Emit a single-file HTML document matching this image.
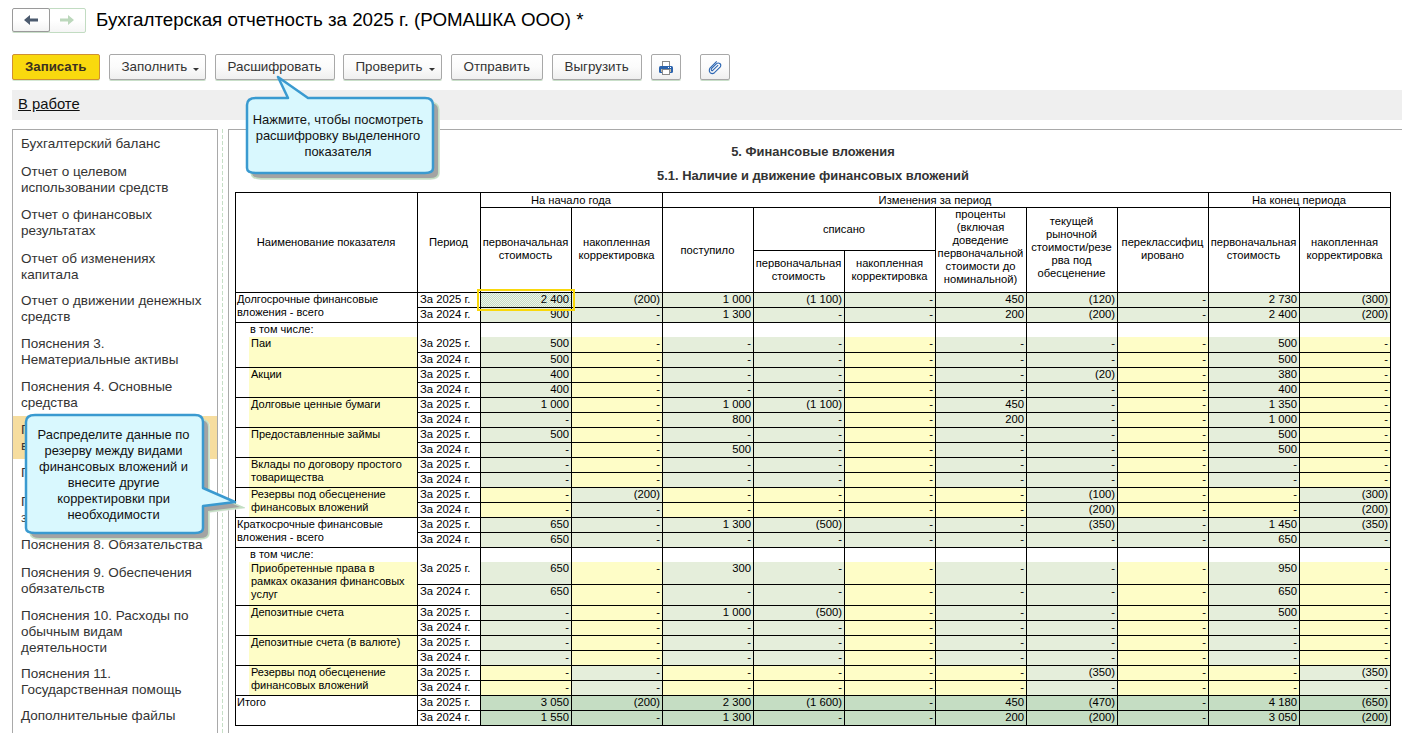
<!DOCTYPE html><html><head><meta charset="utf-8"><style>
*{margin:0;padding:0;box-sizing:border-box}
html,body{width:1402px;height:733px;overflow:hidden;background:#fff;font-family:"Liberation Sans", sans-serif;}
.a{position:absolute}
.t{position:absolute;font-size:11.3px;line-height:13px;color:#000;white-space:nowrap}
.hl{position:absolute;background:#000;height:1px}
.vl{position:absolute;background:#000;width:1px}
.btn{position:absolute;top:54px;height:26px;border:1px solid #a8a8a8;border-radius:2px;background:linear-gradient(#ffffff 0%,#fbfbfb 50%,#efefef 100%);box-shadow:0 1px 0 #c9dfc9;font-size:13px;color:#333;text-align:center;line-height:24px;white-space:nowrap}
.side{position:absolute;left:21px;font-size:13.5px;line-height:16px;color:#333;white-space:nowrap}
</style></head><body>
<div class="a" style="left:49px;top:8px;width:37px;height:25px;border:1px solid #c2dcc2;border-radius:0 2px 2px 0;background:linear-gradient(#fff 50%,#f5f5f5)"></div>
<div class="a" style="left:12px;top:8px;width:38px;height:24px;border:1px solid #9a9a9a;border-radius:2px;background:linear-gradient(#fff 50%,#f3f3f3);box-shadow:0 1px 0 #c9dfc9"></div>
<svg class="a" style="left:24px;top:15px" width="15" height="11"><path d="M0 5 L6 0 L6 3.5 L14 3.5 L14 6.5 L6 6.5 L6 10 Z" fill="#4b5a6e"/></svg>
<svg class="a" style="left:60px;top:15px" width="15" height="11"><path d="M14 5 L8 0 L8 3.5 L0 3.5 L0 6.5 L8 6.5 L8 10 Z" fill="#bcd8bc"/></svg>
<div class="a" style="left:96px;top:6.5px;font-size:18.75px;line-height:26px;color:#000;white-space:nowrap">Бухгалтерская отчетность за 2025 г. (РОМАШКА ООО) *</div>
<div class="btn" style="left:12px;width:88px;background:#f9d90e;border-color:#cf9034;box-shadow:0 1px 0 #d5e8d5"></div>
<div class="a" style="left:25px;top:59px;font-size:13.25px;line-height:16px;font-weight:bold;color:#3b3020;white-space:nowrap">Записать</div>
<div class="btn" style="left:109px;width:97px"></div>
<div class="a" style="left:121.5px;top:59px;font-size:13.4px;line-height:16px;color:#333;white-space:nowrap">Заполнить</div>
<svg class="a" style="left:193px;top:68px" width="7" height="4"><path d="M0 0 L6 0 L3 3 Z" fill="#333"/></svg>
<div class="btn" style="left:215px;width:120px"></div>
<div class="a" style="left:227.5px;top:59px;font-size:13.4px;line-height:16px;color:#333;white-space:nowrap">Расшифровать</div>
<div class="btn" style="left:343px;width:99px"></div>
<div class="a" style="left:355.5px;top:59px;font-size:13.4px;line-height:16px;color:#333;white-space:nowrap">Проверить</div>
<svg class="a" style="left:429px;top:68px" width="7" height="4"><path d="M0 0 L6 0 L3 3 Z" fill="#333"/></svg>
<div class="btn" style="left:451px;width:92px"></div>
<div class="a" style="left:463.5px;top:59px;font-size:13.4px;line-height:16px;color:#333;white-space:nowrap">Отправить</div>
<div class="btn" style="left:552px;width:90px"></div>
<div class="a" style="left:564.5px;top:59px;font-size:13.4px;line-height:16px;color:#333;white-space:nowrap">Выгрузить</div>
<div class="btn" style="left:651px;width:30px"></div>
<div class="btn" style="left:700px;width:30px"></div>
<svg class="a" style="left:653px;top:56px" width="26" height="22"><rect x="9.5" y="5.5" width="7" height="6" fill="#fff" stroke="#8a8a8a" stroke-width="1"/><path d="M15 5 L17 7 L17 5 Z" fill="#8a8a8a"/><rect x="6" y="10" width="14" height="7" rx="1.5" fill="#2b63ad"/><rect x="15" y="11" width="1" height="1" fill="#fff"/><rect x="17" y="11" width="1" height="1" fill="#fff"/><rect x="8" y="13" width="1" height="3" fill="#c8bfa8"/><rect x="17" y="13" width="1" height="3" fill="#c8bfa8"/><rect x="9.5" y="13.5" width="7" height="5" fill="#fff" stroke="#8a8a8a" stroke-width="1"/></svg>
<svg class="a" style="left:702px;top:56px" width="26" height="22"><path d="M14.7 5.4 L7.8 12.3 Q6.5 15.5 8.5 17 Q10.5 18.3 12.5 16.7 L18.3 11 Q19.5 8.8 17.8 7.5 Q16 6.3 14.3 7.8 L9.5 12.6 Q8.8 14.3 10.2 14.8 L16.2 9.2" fill="none" stroke="#2d67b3" stroke-width="1.1"/></svg>
<div class="a" style="left:12px;top:90px;width:1390px;height:30px;background:#efefef"></div>
<div class="a" style="left:18px;top:95px;font-size:14.8px;line-height:18px;color:#111;text-decoration:underline;white-space:nowrap">В работе</div>
<div class="a" style="left:12px;top:129px;width:206px;height:620px;border:1px solid #a9a9a9;border-bottom:none"></div>
<div class="a" style="left:13px;top:416px;width:204px;height:43px;background:#f6dd9f"></div>
<div class="side" style="top:135.5px">Бухгалтерский баланс</div>
<div class="side" style="top:163.5px">Отчет о целевом<br>использовании средств</div>
<div class="side" style="top:206.5px">Отчет о финансовых<br>результатах</div>
<div class="side" style="top:250.5px">Отчет об изменениях<br>капитала</div>
<div class="side" style="top:292.5px">Отчет о движении денежных<br>средств</div>
<div class="side" style="top:335.5px">Пояснения 3.<br>Нематериальные активы</div>
<div class="side" style="top:378.5px">Пояснения 4. Основные<br>средства</div>
<div class="side" style="top:421.5px">Пояснения 5. Финансовые<br>вложения</div>
<div class="side" style="top:464.5px">Пояснения 6. Запасы</div>
<div class="side" style="top:493.5px">Пояснения 7. Дебиторская<br>задолженность</div>
<div class="side" style="top:536.5px">Пояснения 8. Обязательства</div>
<div class="side" style="top:564.5px">Пояснения 9. Обеспечения<br>обязательств</div>
<div class="side" style="top:607.5px">Пояснения 10. Расходы по<br>обычным видам<br>деятельности</div>
<div class="side" style="top:665.5px">Пояснения 11.<br>Государственная помощь</div>
<div class="side" style="top:707.5px">Дополнительные файлы</div>
<div class="a" style="left:222px;top:129px;width:1px;height:604px;background:repeating-linear-gradient(#c6dfc6 0 4px,transparent 4px 6px)"></div>
<div class="a" style="left:228px;top:129px;width:1180px;height:620px;border:1px solid #a9a9a9;border-right:none;border-bottom:none"></div>
<div class="a" style="left:613px;top:144px;width:400px;text-align:center;font-size:12.9px;font-weight:bold;line-height:16px;color:#333">5. Финансовые вложения</div>
<div class="a" style="left:513px;top:168px;width:600px;text-align:center;font-size:12.9px;font-weight:bold;line-height:16px;color:#333">5.1. Наличие и движение финансовых вложений</div>
<div class="t" style="left:237px;top:293px;font-size:11px">Долгосрочные финансовые<br>вложения - всего</div><div class="t" style="left:420px;top:293px;">За 2025 г.</div><div class="a" style="left:481px;top:293px;width:90px;height:14px;background:repeating-conic-gradient(#c4dcc4 0 25%,#eef4e8 0 50%) 0 0/2px 2px"></div><div class="t" style="left:480px;width:89px;top:293px;text-align:right;">2 400</div><div class="a" style="left:572px;top:293px;width:90px;height:14px;background:#e5eedb"></div><div class="t" style="left:571px;width:89px;top:293px;text-align:right;">(200)</div><div class="a" style="left:663px;top:293px;width:90px;height:14px;background:#e5eedb"></div><div class="t" style="left:662px;width:89px;top:293px;text-align:right;">1 000</div><div class="a" style="left:754px;top:293px;width:90px;height:14px;background:#e5eedb"></div><div class="t" style="left:753px;width:89px;top:293px;text-align:right;">(1 100)</div><div class="a" style="left:845px;top:293px;width:90px;height:14px;background:#e5eedb"></div><div class="t" style="left:844px;width:89px;top:293px;text-align:right;">-</div><div class="a" style="left:936px;top:293px;width:90px;height:14px;background:#e5eedb"></div><div class="t" style="left:935px;width:89px;top:293px;text-align:right;">450</div><div class="a" style="left:1027px;top:293px;width:90px;height:14px;background:#e5eedb"></div><div class="t" style="left:1026px;width:89px;top:293px;text-align:right;">(120)</div><div class="a" style="left:1118px;top:293px;width:90px;height:14px;background:#e5eedb"></div><div class="t" style="left:1117px;width:89px;top:293px;text-align:right;">-</div><div class="a" style="left:1209px;top:293px;width:90px;height:14px;background:#e5eedb"></div><div class="t" style="left:1208px;width:89px;top:293px;text-align:right;">2 730</div><div class="a" style="left:1300px;top:293px;width:90px;height:14px;background:#e5eedb"></div><div class="t" style="left:1299px;width:89px;top:293px;text-align:right;">(300)</div><div class="t" style="left:420px;top:308px;">За 2024 г.</div><div class="a" style="left:481px;top:308px;width:90px;height:14px;background:#e5eedb"></div><div class="t" style="left:480px;width:89px;top:308px;text-align:right;">900</div><div class="a" style="left:572px;top:308px;width:90px;height:14px;background:#e5eedb"></div><div class="t" style="left:571px;width:89px;top:308px;text-align:right;">-</div><div class="a" style="left:663px;top:308px;width:90px;height:14px;background:#e5eedb"></div><div class="t" style="left:662px;width:89px;top:308px;text-align:right;">1 300</div><div class="a" style="left:754px;top:308px;width:90px;height:14px;background:#e5eedb"></div><div class="t" style="left:753px;width:89px;top:308px;text-align:right;">-</div><div class="a" style="left:845px;top:308px;width:90px;height:14px;background:#e5eedb"></div><div class="t" style="left:844px;width:89px;top:308px;text-align:right;">-</div><div class="a" style="left:936px;top:308px;width:90px;height:14px;background:#e5eedb"></div><div class="t" style="left:935px;width:89px;top:308px;text-align:right;">200</div><div class="a" style="left:1027px;top:308px;width:90px;height:14px;background:#e5eedb"></div><div class="t" style="left:1026px;width:89px;top:308px;text-align:right;">(200)</div><div class="a" style="left:1118px;top:308px;width:90px;height:14px;background:#e5eedb"></div><div class="t" style="left:1117px;width:89px;top:308px;text-align:right;">-</div><div class="a" style="left:1209px;top:308px;width:90px;height:14px;background:#e5eedb"></div><div class="t" style="left:1208px;width:89px;top:308px;text-align:right;">2 400</div><div class="a" style="left:1300px;top:308px;width:90px;height:14px;background:#e5eedb"></div><div class="t" style="left:1299px;width:89px;top:308px;text-align:right;">(200)</div><div class="t" style="left:250px;top:323px;font-size:11px">в том числе:</div><div class="a" style="left:249px;top:337px;width:168px;height:30px;background:#fefdc7"></div><div class="t" style="left:251px;top:337px;font-size:11px">Паи</div><div class="t" style="left:420px;top:337px;">За 2025 г.</div><div class="a" style="left:481px;top:337px;width:90px;height:15px;background:#e5eedb"></div><div class="t" style="left:480px;width:89px;top:337px;text-align:right;">500</div><div class="a" style="left:572px;top:337px;width:90px;height:15px;background:#fefdc7"></div><div class="t" style="left:571px;width:89px;top:337px;text-align:right;">-</div><div class="a" style="left:663px;top:337px;width:90px;height:15px;background:#e5eedb"></div><div class="t" style="left:662px;width:89px;top:337px;text-align:right;">-</div><div class="a" style="left:754px;top:337px;width:90px;height:15px;background:#e5eedb"></div><div class="t" style="left:753px;width:89px;top:337px;text-align:right;">-</div><div class="a" style="left:845px;top:337px;width:90px;height:15px;background:#fefdc7"></div><div class="t" style="left:844px;width:89px;top:337px;text-align:right;">-</div><div class="a" style="left:936px;top:337px;width:90px;height:15px;background:#e5eedb"></div><div class="t" style="left:935px;width:89px;top:337px;text-align:right;">-</div><div class="a" style="left:1027px;top:337px;width:90px;height:15px;background:#e5eedb"></div><div class="t" style="left:1026px;width:89px;top:337px;text-align:right;">-</div><div class="a" style="left:1118px;top:337px;width:90px;height:15px;background:#fefdc7"></div><div class="t" style="left:1117px;width:89px;top:337px;text-align:right;">-</div><div class="a" style="left:1209px;top:337px;width:90px;height:15px;background:#e5eedb"></div><div class="t" style="left:1208px;width:89px;top:337px;text-align:right;">500</div><div class="a" style="left:1300px;top:337px;width:90px;height:15px;background:#fefdc7"></div><div class="t" style="left:1299px;width:89px;top:337px;text-align:right;">-</div><div class="t" style="left:420px;top:353px;">За 2024 г.</div><div class="a" style="left:481px;top:353px;width:90px;height:14px;background:#e5eedb"></div><div class="t" style="left:480px;width:89px;top:353px;text-align:right;">500</div><div class="a" style="left:572px;top:353px;width:90px;height:14px;background:#fefdc7"></div><div class="t" style="left:571px;width:89px;top:353px;text-align:right;">-</div><div class="a" style="left:663px;top:353px;width:90px;height:14px;background:#e5eedb"></div><div class="t" style="left:662px;width:89px;top:353px;text-align:right;">-</div><div class="a" style="left:754px;top:353px;width:90px;height:14px;background:#e5eedb"></div><div class="t" style="left:753px;width:89px;top:353px;text-align:right;">-</div><div class="a" style="left:845px;top:353px;width:90px;height:14px;background:#fefdc7"></div><div class="t" style="left:844px;width:89px;top:353px;text-align:right;">-</div><div class="a" style="left:936px;top:353px;width:90px;height:14px;background:#e5eedb"></div><div class="t" style="left:935px;width:89px;top:353px;text-align:right;">-</div><div class="a" style="left:1027px;top:353px;width:90px;height:14px;background:#e5eedb"></div><div class="t" style="left:1026px;width:89px;top:353px;text-align:right;">-</div><div class="a" style="left:1118px;top:353px;width:90px;height:14px;background:#fefdc7"></div><div class="t" style="left:1117px;width:89px;top:353px;text-align:right;">-</div><div class="a" style="left:1209px;top:353px;width:90px;height:14px;background:#e5eedb"></div><div class="t" style="left:1208px;width:89px;top:353px;text-align:right;">500</div><div class="a" style="left:1300px;top:353px;width:90px;height:14px;background:#fefdc7"></div><div class="t" style="left:1299px;width:89px;top:353px;text-align:right;">-</div><div class="a" style="left:249px;top:368px;width:168px;height:29px;background:#fefdc7"></div><div class="t" style="left:251px;top:368px;font-size:11px">Акции</div><div class="t" style="left:420px;top:368px;">За 2025 г.</div><div class="a" style="left:481px;top:368px;width:90px;height:14px;background:#e5eedb"></div><div class="t" style="left:480px;width:89px;top:368px;text-align:right;">400</div><div class="a" style="left:572px;top:368px;width:90px;height:14px;background:#fefdc7"></div><div class="t" style="left:571px;width:89px;top:368px;text-align:right;">-</div><div class="a" style="left:663px;top:368px;width:90px;height:14px;background:#e5eedb"></div><div class="t" style="left:662px;width:89px;top:368px;text-align:right;">-</div><div class="a" style="left:754px;top:368px;width:90px;height:14px;background:#e5eedb"></div><div class="t" style="left:753px;width:89px;top:368px;text-align:right;">-</div><div class="a" style="left:845px;top:368px;width:90px;height:14px;background:#fefdc7"></div><div class="t" style="left:844px;width:89px;top:368px;text-align:right;">-</div><div class="a" style="left:936px;top:368px;width:90px;height:14px;background:#e5eedb"></div><div class="t" style="left:935px;width:89px;top:368px;text-align:right;">-</div><div class="a" style="left:1027px;top:368px;width:90px;height:14px;background:#e5eedb"></div><div class="t" style="left:1026px;width:89px;top:368px;text-align:right;">(20)</div><div class="a" style="left:1118px;top:368px;width:90px;height:14px;background:#fefdc7"></div><div class="t" style="left:1117px;width:89px;top:368px;text-align:right;">-</div><div class="a" style="left:1209px;top:368px;width:90px;height:14px;background:#e5eedb"></div><div class="t" style="left:1208px;width:89px;top:368px;text-align:right;">380</div><div class="a" style="left:1300px;top:368px;width:90px;height:14px;background:#fefdc7"></div><div class="t" style="left:1299px;width:89px;top:368px;text-align:right;">-</div><div class="t" style="left:420px;top:383px;">За 2024 г.</div><div class="a" style="left:481px;top:383px;width:90px;height:14px;background:#e5eedb"></div><div class="t" style="left:480px;width:89px;top:383px;text-align:right;">400</div><div class="a" style="left:572px;top:383px;width:90px;height:14px;background:#fefdc7"></div><div class="t" style="left:571px;width:89px;top:383px;text-align:right;">-</div><div class="a" style="left:663px;top:383px;width:90px;height:14px;background:#e5eedb"></div><div class="t" style="left:662px;width:89px;top:383px;text-align:right;">-</div><div class="a" style="left:754px;top:383px;width:90px;height:14px;background:#e5eedb"></div><div class="t" style="left:753px;width:89px;top:383px;text-align:right;">-</div><div class="a" style="left:845px;top:383px;width:90px;height:14px;background:#fefdc7"></div><div class="t" style="left:844px;width:89px;top:383px;text-align:right;">-</div><div class="a" style="left:936px;top:383px;width:90px;height:14px;background:#e5eedb"></div><div class="t" style="left:935px;width:89px;top:383px;text-align:right;">-</div><div class="a" style="left:1027px;top:383px;width:90px;height:14px;background:#e5eedb"></div><div class="t" style="left:1026px;width:89px;top:383px;text-align:right;">-</div><div class="a" style="left:1118px;top:383px;width:90px;height:14px;background:#fefdc7"></div><div class="t" style="left:1117px;width:89px;top:383px;text-align:right;">-</div><div class="a" style="left:1209px;top:383px;width:90px;height:14px;background:#e5eedb"></div><div class="t" style="left:1208px;width:89px;top:383px;text-align:right;">400</div><div class="a" style="left:1300px;top:383px;width:90px;height:14px;background:#fefdc7"></div><div class="t" style="left:1299px;width:89px;top:383px;text-align:right;">-</div><div class="a" style="left:249px;top:398px;width:168px;height:29px;background:#fefdc7"></div><div class="t" style="left:251px;top:398px;font-size:11px">Долговые ценные бумаги</div><div class="t" style="left:420px;top:398px;">За 2025 г.</div><div class="a" style="left:481px;top:398px;width:90px;height:14px;background:#e5eedb"></div><div class="t" style="left:480px;width:89px;top:398px;text-align:right;">1 000</div><div class="a" style="left:572px;top:398px;width:90px;height:14px;background:#fefdc7"></div><div class="t" style="left:571px;width:89px;top:398px;text-align:right;">-</div><div class="a" style="left:663px;top:398px;width:90px;height:14px;background:#e5eedb"></div><div class="t" style="left:662px;width:89px;top:398px;text-align:right;">1 000</div><div class="a" style="left:754px;top:398px;width:90px;height:14px;background:#e5eedb"></div><div class="t" style="left:753px;width:89px;top:398px;text-align:right;">(1 100)</div><div class="a" style="left:845px;top:398px;width:90px;height:14px;background:#fefdc7"></div><div class="t" style="left:844px;width:89px;top:398px;text-align:right;">-</div><div class="a" style="left:936px;top:398px;width:90px;height:14px;background:#e5eedb"></div><div class="t" style="left:935px;width:89px;top:398px;text-align:right;">450</div><div class="a" style="left:1027px;top:398px;width:90px;height:14px;background:#e5eedb"></div><div class="t" style="left:1026px;width:89px;top:398px;text-align:right;">-</div><div class="a" style="left:1118px;top:398px;width:90px;height:14px;background:#fefdc7"></div><div class="t" style="left:1117px;width:89px;top:398px;text-align:right;">-</div><div class="a" style="left:1209px;top:398px;width:90px;height:14px;background:#e5eedb"></div><div class="t" style="left:1208px;width:89px;top:398px;text-align:right;">1 350</div><div class="a" style="left:1300px;top:398px;width:90px;height:14px;background:#fefdc7"></div><div class="t" style="left:1299px;width:89px;top:398px;text-align:right;">-</div><div class="t" style="left:420px;top:413px;">За 2024 г.</div><div class="a" style="left:481px;top:413px;width:90px;height:14px;background:#e5eedb"></div><div class="t" style="left:480px;width:89px;top:413px;text-align:right;">-</div><div class="a" style="left:572px;top:413px;width:90px;height:14px;background:#fefdc7"></div><div class="t" style="left:571px;width:89px;top:413px;text-align:right;">-</div><div class="a" style="left:663px;top:413px;width:90px;height:14px;background:#e5eedb"></div><div class="t" style="left:662px;width:89px;top:413px;text-align:right;">800</div><div class="a" style="left:754px;top:413px;width:90px;height:14px;background:#e5eedb"></div><div class="t" style="left:753px;width:89px;top:413px;text-align:right;">-</div><div class="a" style="left:845px;top:413px;width:90px;height:14px;background:#fefdc7"></div><div class="t" style="left:844px;width:89px;top:413px;text-align:right;">-</div><div class="a" style="left:936px;top:413px;width:90px;height:14px;background:#e5eedb"></div><div class="t" style="left:935px;width:89px;top:413px;text-align:right;">200</div><div class="a" style="left:1027px;top:413px;width:90px;height:14px;background:#e5eedb"></div><div class="t" style="left:1026px;width:89px;top:413px;text-align:right;">-</div><div class="a" style="left:1118px;top:413px;width:90px;height:14px;background:#fefdc7"></div><div class="t" style="left:1117px;width:89px;top:413px;text-align:right;">-</div><div class="a" style="left:1209px;top:413px;width:90px;height:14px;background:#e5eedb"></div><div class="t" style="left:1208px;width:89px;top:413px;text-align:right;">1 000</div><div class="a" style="left:1300px;top:413px;width:90px;height:14px;background:#fefdc7"></div><div class="t" style="left:1299px;width:89px;top:413px;text-align:right;">-</div><div class="a" style="left:249px;top:428px;width:168px;height:29px;background:#fefdc7"></div><div class="t" style="left:251px;top:428px;font-size:11px">Предоставленные займы</div><div class="t" style="left:420px;top:428px;">За 2025 г.</div><div class="a" style="left:481px;top:428px;width:90px;height:14px;background:#e5eedb"></div><div class="t" style="left:480px;width:89px;top:428px;text-align:right;">500</div><div class="a" style="left:572px;top:428px;width:90px;height:14px;background:#fefdc7"></div><div class="t" style="left:571px;width:89px;top:428px;text-align:right;">-</div><div class="a" style="left:663px;top:428px;width:90px;height:14px;background:#e5eedb"></div><div class="t" style="left:662px;width:89px;top:428px;text-align:right;">-</div><div class="a" style="left:754px;top:428px;width:90px;height:14px;background:#e5eedb"></div><div class="t" style="left:753px;width:89px;top:428px;text-align:right;">-</div><div class="a" style="left:845px;top:428px;width:90px;height:14px;background:#fefdc7"></div><div class="t" style="left:844px;width:89px;top:428px;text-align:right;">-</div><div class="a" style="left:936px;top:428px;width:90px;height:14px;background:#e5eedb"></div><div class="t" style="left:935px;width:89px;top:428px;text-align:right;">-</div><div class="a" style="left:1027px;top:428px;width:90px;height:14px;background:#e5eedb"></div><div class="t" style="left:1026px;width:89px;top:428px;text-align:right;">-</div><div class="a" style="left:1118px;top:428px;width:90px;height:14px;background:#fefdc7"></div><div class="t" style="left:1117px;width:89px;top:428px;text-align:right;">-</div><div class="a" style="left:1209px;top:428px;width:90px;height:14px;background:#e5eedb"></div><div class="t" style="left:1208px;width:89px;top:428px;text-align:right;">500</div><div class="a" style="left:1300px;top:428px;width:90px;height:14px;background:#fefdc7"></div><div class="t" style="left:1299px;width:89px;top:428px;text-align:right;">-</div><div class="t" style="left:420px;top:443px;">За 2024 г.</div><div class="a" style="left:481px;top:443px;width:90px;height:14px;background:#e5eedb"></div><div class="t" style="left:480px;width:89px;top:443px;text-align:right;">-</div><div class="a" style="left:572px;top:443px;width:90px;height:14px;background:#fefdc7"></div><div class="t" style="left:571px;width:89px;top:443px;text-align:right;">-</div><div class="a" style="left:663px;top:443px;width:90px;height:14px;background:#e5eedb"></div><div class="t" style="left:662px;width:89px;top:443px;text-align:right;">500</div><div class="a" style="left:754px;top:443px;width:90px;height:14px;background:#e5eedb"></div><div class="t" style="left:753px;width:89px;top:443px;text-align:right;">-</div><div class="a" style="left:845px;top:443px;width:90px;height:14px;background:#fefdc7"></div><div class="t" style="left:844px;width:89px;top:443px;text-align:right;">-</div><div class="a" style="left:936px;top:443px;width:90px;height:14px;background:#e5eedb"></div><div class="t" style="left:935px;width:89px;top:443px;text-align:right;">-</div><div class="a" style="left:1027px;top:443px;width:90px;height:14px;background:#e5eedb"></div><div class="t" style="left:1026px;width:89px;top:443px;text-align:right;">-</div><div class="a" style="left:1118px;top:443px;width:90px;height:14px;background:#fefdc7"></div><div class="t" style="left:1117px;width:89px;top:443px;text-align:right;">-</div><div class="a" style="left:1209px;top:443px;width:90px;height:14px;background:#e5eedb"></div><div class="t" style="left:1208px;width:89px;top:443px;text-align:right;">500</div><div class="a" style="left:1300px;top:443px;width:90px;height:14px;background:#fefdc7"></div><div class="t" style="left:1299px;width:89px;top:443px;text-align:right;">-</div><div class="a" style="left:249px;top:458px;width:168px;height:29px;background:#fefdc7"></div><div class="t" style="left:251px;top:458px;font-size:11px">Вклады по договору простого<br>товарищества</div><div class="t" style="left:420px;top:458px;">За 2025 г.</div><div class="a" style="left:481px;top:458px;width:90px;height:14px;background:#e5eedb"></div><div class="t" style="left:480px;width:89px;top:458px;text-align:right;">-</div><div class="a" style="left:572px;top:458px;width:90px;height:14px;background:#fefdc7"></div><div class="t" style="left:571px;width:89px;top:458px;text-align:right;">-</div><div class="a" style="left:663px;top:458px;width:90px;height:14px;background:#e5eedb"></div><div class="t" style="left:662px;width:89px;top:458px;text-align:right;">-</div><div class="a" style="left:754px;top:458px;width:90px;height:14px;background:#e5eedb"></div><div class="t" style="left:753px;width:89px;top:458px;text-align:right;">-</div><div class="a" style="left:845px;top:458px;width:90px;height:14px;background:#fefdc7"></div><div class="t" style="left:844px;width:89px;top:458px;text-align:right;">-</div><div class="a" style="left:936px;top:458px;width:90px;height:14px;background:#e5eedb"></div><div class="t" style="left:935px;width:89px;top:458px;text-align:right;">-</div><div class="a" style="left:1027px;top:458px;width:90px;height:14px;background:#e5eedb"></div><div class="t" style="left:1026px;width:89px;top:458px;text-align:right;">-</div><div class="a" style="left:1118px;top:458px;width:90px;height:14px;background:#fefdc7"></div><div class="t" style="left:1117px;width:89px;top:458px;text-align:right;">-</div><div class="a" style="left:1209px;top:458px;width:90px;height:14px;background:#e5eedb"></div><div class="t" style="left:1208px;width:89px;top:458px;text-align:right;">-</div><div class="a" style="left:1300px;top:458px;width:90px;height:14px;background:#fefdc7"></div><div class="t" style="left:1299px;width:89px;top:458px;text-align:right;">-</div><div class="t" style="left:420px;top:473px;">За 2024 г.</div><div class="a" style="left:481px;top:473px;width:90px;height:14px;background:#e5eedb"></div><div class="t" style="left:480px;width:89px;top:473px;text-align:right;">-</div><div class="a" style="left:572px;top:473px;width:90px;height:14px;background:#fefdc7"></div><div class="t" style="left:571px;width:89px;top:473px;text-align:right;">-</div><div class="a" style="left:663px;top:473px;width:90px;height:14px;background:#e5eedb"></div><div class="t" style="left:662px;width:89px;top:473px;text-align:right;">-</div><div class="a" style="left:754px;top:473px;width:90px;height:14px;background:#e5eedb"></div><div class="t" style="left:753px;width:89px;top:473px;text-align:right;">-</div><div class="a" style="left:845px;top:473px;width:90px;height:14px;background:#fefdc7"></div><div class="t" style="left:844px;width:89px;top:473px;text-align:right;">-</div><div class="a" style="left:936px;top:473px;width:90px;height:14px;background:#e5eedb"></div><div class="t" style="left:935px;width:89px;top:473px;text-align:right;">-</div><div class="a" style="left:1027px;top:473px;width:90px;height:14px;background:#e5eedb"></div><div class="t" style="left:1026px;width:89px;top:473px;text-align:right;">-</div><div class="a" style="left:1118px;top:473px;width:90px;height:14px;background:#fefdc7"></div><div class="t" style="left:1117px;width:89px;top:473px;text-align:right;">-</div><div class="a" style="left:1209px;top:473px;width:90px;height:14px;background:#e5eedb"></div><div class="t" style="left:1208px;width:89px;top:473px;text-align:right;">-</div><div class="a" style="left:1300px;top:473px;width:90px;height:14px;background:#fefdc7"></div><div class="t" style="left:1299px;width:89px;top:473px;text-align:right;">-</div><div class="a" style="left:249px;top:488px;width:168px;height:29px;background:#fefdc7"></div><div class="t" style="left:251px;top:488px;font-size:11px">Резервы под обесценение<br>финансовых вложений</div><div class="t" style="left:420px;top:488px;">За 2025 г.</div><div class="a" style="left:481px;top:488px;width:90px;height:14px;background:#fefdc7"></div><div class="t" style="left:480px;width:89px;top:488px;text-align:right;">-</div><div class="a" style="left:572px;top:488px;width:90px;height:14px;background:#e5eedb"></div><div class="t" style="left:571px;width:89px;top:488px;text-align:right;">(200)</div><div class="a" style="left:663px;top:488px;width:90px;height:14px;background:#fefdc7"></div><div class="t" style="left:662px;width:89px;top:488px;text-align:right;">-</div><div class="a" style="left:754px;top:488px;width:90px;height:14px;background:#fefdc7"></div><div class="t" style="left:753px;width:89px;top:488px;text-align:right;">-</div><div class="a" style="left:845px;top:488px;width:90px;height:14px;background:#fefdc7"></div><div class="t" style="left:844px;width:89px;top:488px;text-align:right;">-</div><div class="a" style="left:936px;top:488px;width:90px;height:14px;background:#fefdc7"></div><div class="t" style="left:935px;width:89px;top:488px;text-align:right;">-</div><div class="a" style="left:1027px;top:488px;width:90px;height:14px;background:#e5eedb"></div><div class="t" style="left:1026px;width:89px;top:488px;text-align:right;">(100)</div><div class="a" style="left:1118px;top:488px;width:90px;height:14px;background:#fefdc7"></div><div class="t" style="left:1117px;width:89px;top:488px;text-align:right;">-</div><div class="a" style="left:1209px;top:488px;width:90px;height:14px;background:#fefdc7"></div><div class="t" style="left:1208px;width:89px;top:488px;text-align:right;">-</div><div class="a" style="left:1300px;top:488px;width:90px;height:14px;background:#e5eedb"></div><div class="t" style="left:1299px;width:89px;top:488px;text-align:right;">(300)</div><div class="t" style="left:420px;top:503px;">За 2024 г.</div><div class="a" style="left:481px;top:503px;width:90px;height:14px;background:#fefdc7"></div><div class="t" style="left:480px;width:89px;top:503px;text-align:right;">-</div><div class="a" style="left:572px;top:503px;width:90px;height:14px;background:#e5eedb"></div><div class="t" style="left:571px;width:89px;top:503px;text-align:right;">-</div><div class="a" style="left:663px;top:503px;width:90px;height:14px;background:#fefdc7"></div><div class="t" style="left:662px;width:89px;top:503px;text-align:right;">-</div><div class="a" style="left:754px;top:503px;width:90px;height:14px;background:#fefdc7"></div><div class="t" style="left:753px;width:89px;top:503px;text-align:right;">-</div><div class="a" style="left:845px;top:503px;width:90px;height:14px;background:#fefdc7"></div><div class="t" style="left:844px;width:89px;top:503px;text-align:right;">-</div><div class="a" style="left:936px;top:503px;width:90px;height:14px;background:#fefdc7"></div><div class="t" style="left:935px;width:89px;top:503px;text-align:right;">-</div><div class="a" style="left:1027px;top:503px;width:90px;height:14px;background:#e5eedb"></div><div class="t" style="left:1026px;width:89px;top:503px;text-align:right;">(200)</div><div class="a" style="left:1118px;top:503px;width:90px;height:14px;background:#fefdc7"></div><div class="t" style="left:1117px;width:89px;top:503px;text-align:right;">-</div><div class="a" style="left:1209px;top:503px;width:90px;height:14px;background:#fefdc7"></div><div class="t" style="left:1208px;width:89px;top:503px;text-align:right;">-</div><div class="a" style="left:1300px;top:503px;width:90px;height:14px;background:#e5eedb"></div><div class="t" style="left:1299px;width:89px;top:503px;text-align:right;">(200)</div><div class="t" style="left:237px;top:518px;font-size:11px">Краткосрочные финансовые<br>вложения - всего</div><div class="t" style="left:420px;top:518px;">За 2025 г.</div><div class="a" style="left:481px;top:518px;width:90px;height:14px;background:#e5eedb"></div><div class="t" style="left:480px;width:89px;top:518px;text-align:right;">650</div><div class="a" style="left:572px;top:518px;width:90px;height:14px;background:#e5eedb"></div><div class="t" style="left:571px;width:89px;top:518px;text-align:right;">-</div><div class="a" style="left:663px;top:518px;width:90px;height:14px;background:#e5eedb"></div><div class="t" style="left:662px;width:89px;top:518px;text-align:right;">1 300</div><div class="a" style="left:754px;top:518px;width:90px;height:14px;background:#e5eedb"></div><div class="t" style="left:753px;width:89px;top:518px;text-align:right;">(500)</div><div class="a" style="left:845px;top:518px;width:90px;height:14px;background:#e5eedb"></div><div class="t" style="left:844px;width:89px;top:518px;text-align:right;">-</div><div class="a" style="left:936px;top:518px;width:90px;height:14px;background:#e5eedb"></div><div class="t" style="left:935px;width:89px;top:518px;text-align:right;">-</div><div class="a" style="left:1027px;top:518px;width:90px;height:14px;background:#e5eedb"></div><div class="t" style="left:1026px;width:89px;top:518px;text-align:right;">(350)</div><div class="a" style="left:1118px;top:518px;width:90px;height:14px;background:#e5eedb"></div><div class="t" style="left:1117px;width:89px;top:518px;text-align:right;">-</div><div class="a" style="left:1209px;top:518px;width:90px;height:14px;background:#e5eedb"></div><div class="t" style="left:1208px;width:89px;top:518px;text-align:right;">1 450</div><div class="a" style="left:1300px;top:518px;width:90px;height:14px;background:#e5eedb"></div><div class="t" style="left:1299px;width:89px;top:518px;text-align:right;">(350)</div><div class="t" style="left:420px;top:533px;">За 2024 г.</div><div class="a" style="left:481px;top:533px;width:90px;height:14px;background:#e5eedb"></div><div class="t" style="left:480px;width:89px;top:533px;text-align:right;">650</div><div class="a" style="left:572px;top:533px;width:90px;height:14px;background:#e5eedb"></div><div class="t" style="left:571px;width:89px;top:533px;text-align:right;">-</div><div class="a" style="left:663px;top:533px;width:90px;height:14px;background:#e5eedb"></div><div class="t" style="left:662px;width:89px;top:533px;text-align:right;">-</div><div class="a" style="left:754px;top:533px;width:90px;height:14px;background:#e5eedb"></div><div class="t" style="left:753px;width:89px;top:533px;text-align:right;">-</div><div class="a" style="left:845px;top:533px;width:90px;height:14px;background:#e5eedb"></div><div class="t" style="left:844px;width:89px;top:533px;text-align:right;">-</div><div class="a" style="left:936px;top:533px;width:90px;height:14px;background:#e5eedb"></div><div class="t" style="left:935px;width:89px;top:533px;text-align:right;">-</div><div class="a" style="left:1027px;top:533px;width:90px;height:14px;background:#e5eedb"></div><div class="t" style="left:1026px;width:89px;top:533px;text-align:right;">-</div><div class="a" style="left:1118px;top:533px;width:90px;height:14px;background:#e5eedb"></div><div class="t" style="left:1117px;width:89px;top:533px;text-align:right;">-</div><div class="a" style="left:1209px;top:533px;width:90px;height:14px;background:#e5eedb"></div><div class="t" style="left:1208px;width:89px;top:533px;text-align:right;">650</div><div class="a" style="left:1300px;top:533px;width:90px;height:14px;background:#e5eedb"></div><div class="t" style="left:1299px;width:89px;top:533px;text-align:right;">-</div><div class="t" style="left:250px;top:548px;font-size:11px">в том числе:</div><div class="a" style="left:249px;top:562px;width:168px;height:43px;background:#fefdc7"></div><div class="t" style="left:251px;top:562px;font-size:11px">Приобретенные права в<br>рамках оказания финансовых<br>услуг</div><div class="t" style="left:420px;top:562px;">За 2025 г.</div><div class="a" style="left:481px;top:562px;width:90px;height:22px;background:#e5eedb"></div><div class="t" style="left:480px;width:89px;top:562px;text-align:right;">650</div><div class="a" style="left:572px;top:562px;width:90px;height:22px;background:#fefdc7"></div><div class="t" style="left:571px;width:89px;top:562px;text-align:right;">-</div><div class="a" style="left:663px;top:562px;width:90px;height:22px;background:#e5eedb"></div><div class="t" style="left:662px;width:89px;top:562px;text-align:right;">300</div><div class="a" style="left:754px;top:562px;width:90px;height:22px;background:#e5eedb"></div><div class="t" style="left:753px;width:89px;top:562px;text-align:right;">-</div><div class="a" style="left:845px;top:562px;width:90px;height:22px;background:#fefdc7"></div><div class="t" style="left:844px;width:89px;top:562px;text-align:right;">-</div><div class="a" style="left:936px;top:562px;width:90px;height:22px;background:#e5eedb"></div><div class="t" style="left:935px;width:89px;top:562px;text-align:right;">-</div><div class="a" style="left:1027px;top:562px;width:90px;height:22px;background:#e5eedb"></div><div class="t" style="left:1026px;width:89px;top:562px;text-align:right;">-</div><div class="a" style="left:1118px;top:562px;width:90px;height:22px;background:#fefdc7"></div><div class="t" style="left:1117px;width:89px;top:562px;text-align:right;">-</div><div class="a" style="left:1209px;top:562px;width:90px;height:22px;background:#e5eedb"></div><div class="t" style="left:1208px;width:89px;top:562px;text-align:right;">950</div><div class="a" style="left:1300px;top:562px;width:90px;height:22px;background:#fefdc7"></div><div class="t" style="left:1299px;width:89px;top:562px;text-align:right;">-</div><div class="t" style="left:420px;top:585px;">За 2024 г.</div><div class="a" style="left:481px;top:585px;width:90px;height:20px;background:#e5eedb"></div><div class="t" style="left:480px;width:89px;top:585px;text-align:right;">650</div><div class="a" style="left:572px;top:585px;width:90px;height:20px;background:#fefdc7"></div><div class="t" style="left:571px;width:89px;top:585px;text-align:right;">-</div><div class="a" style="left:663px;top:585px;width:90px;height:20px;background:#e5eedb"></div><div class="t" style="left:662px;width:89px;top:585px;text-align:right;">-</div><div class="a" style="left:754px;top:585px;width:90px;height:20px;background:#e5eedb"></div><div class="t" style="left:753px;width:89px;top:585px;text-align:right;">-</div><div class="a" style="left:845px;top:585px;width:90px;height:20px;background:#fefdc7"></div><div class="t" style="left:844px;width:89px;top:585px;text-align:right;">-</div><div class="a" style="left:936px;top:585px;width:90px;height:20px;background:#e5eedb"></div><div class="t" style="left:935px;width:89px;top:585px;text-align:right;">-</div><div class="a" style="left:1027px;top:585px;width:90px;height:20px;background:#e5eedb"></div><div class="t" style="left:1026px;width:89px;top:585px;text-align:right;">-</div><div class="a" style="left:1118px;top:585px;width:90px;height:20px;background:#fefdc7"></div><div class="t" style="left:1117px;width:89px;top:585px;text-align:right;">-</div><div class="a" style="left:1209px;top:585px;width:90px;height:20px;background:#e5eedb"></div><div class="t" style="left:1208px;width:89px;top:585px;text-align:right;">650</div><div class="a" style="left:1300px;top:585px;width:90px;height:20px;background:#fefdc7"></div><div class="t" style="left:1299px;width:89px;top:585px;text-align:right;">-</div><div class="a" style="left:249px;top:606px;width:168px;height:29px;background:#fefdc7"></div><div class="t" style="left:251px;top:606px;font-size:11px">Депозитные счета</div><div class="t" style="left:420px;top:606px;">За 2025 г.</div><div class="a" style="left:481px;top:606px;width:90px;height:14px;background:#e5eedb"></div><div class="t" style="left:480px;width:89px;top:606px;text-align:right;">-</div><div class="a" style="left:572px;top:606px;width:90px;height:14px;background:#fefdc7"></div><div class="t" style="left:571px;width:89px;top:606px;text-align:right;">-</div><div class="a" style="left:663px;top:606px;width:90px;height:14px;background:#e5eedb"></div><div class="t" style="left:662px;width:89px;top:606px;text-align:right;">1 000</div><div class="a" style="left:754px;top:606px;width:90px;height:14px;background:#e5eedb"></div><div class="t" style="left:753px;width:89px;top:606px;text-align:right;">(500)</div><div class="a" style="left:845px;top:606px;width:90px;height:14px;background:#fefdc7"></div><div class="t" style="left:844px;width:89px;top:606px;text-align:right;">-</div><div class="a" style="left:936px;top:606px;width:90px;height:14px;background:#e5eedb"></div><div class="t" style="left:935px;width:89px;top:606px;text-align:right;">-</div><div class="a" style="left:1027px;top:606px;width:90px;height:14px;background:#e5eedb"></div><div class="t" style="left:1026px;width:89px;top:606px;text-align:right;">-</div><div class="a" style="left:1118px;top:606px;width:90px;height:14px;background:#fefdc7"></div><div class="t" style="left:1117px;width:89px;top:606px;text-align:right;">-</div><div class="a" style="left:1209px;top:606px;width:90px;height:14px;background:#e5eedb"></div><div class="t" style="left:1208px;width:89px;top:606px;text-align:right;">500</div><div class="a" style="left:1300px;top:606px;width:90px;height:14px;background:#fefdc7"></div><div class="t" style="left:1299px;width:89px;top:606px;text-align:right;">-</div><div class="t" style="left:420px;top:621px;">За 2024 г.</div><div class="a" style="left:481px;top:621px;width:90px;height:14px;background:#e5eedb"></div><div class="t" style="left:480px;width:89px;top:621px;text-align:right;">-</div><div class="a" style="left:572px;top:621px;width:90px;height:14px;background:#fefdc7"></div><div class="t" style="left:571px;width:89px;top:621px;text-align:right;">-</div><div class="a" style="left:663px;top:621px;width:90px;height:14px;background:#e5eedb"></div><div class="t" style="left:662px;width:89px;top:621px;text-align:right;">-</div><div class="a" style="left:754px;top:621px;width:90px;height:14px;background:#e5eedb"></div><div class="t" style="left:753px;width:89px;top:621px;text-align:right;">-</div><div class="a" style="left:845px;top:621px;width:90px;height:14px;background:#fefdc7"></div><div class="t" style="left:844px;width:89px;top:621px;text-align:right;">-</div><div class="a" style="left:936px;top:621px;width:90px;height:14px;background:#e5eedb"></div><div class="t" style="left:935px;width:89px;top:621px;text-align:right;">-</div><div class="a" style="left:1027px;top:621px;width:90px;height:14px;background:#e5eedb"></div><div class="t" style="left:1026px;width:89px;top:621px;text-align:right;">-</div><div class="a" style="left:1118px;top:621px;width:90px;height:14px;background:#fefdc7"></div><div class="t" style="left:1117px;width:89px;top:621px;text-align:right;">-</div><div class="a" style="left:1209px;top:621px;width:90px;height:14px;background:#e5eedb"></div><div class="t" style="left:1208px;width:89px;top:621px;text-align:right;">-</div><div class="a" style="left:1300px;top:621px;width:90px;height:14px;background:#fefdc7"></div><div class="t" style="left:1299px;width:89px;top:621px;text-align:right;">-</div><div class="a" style="left:249px;top:636px;width:168px;height:29px;background:#fefdc7"></div><div class="t" style="left:251px;top:636px;font-size:11px">Депозитные счета (в валюте)</div><div class="t" style="left:420px;top:636px;">За 2025 г.</div><div class="a" style="left:481px;top:636px;width:90px;height:14px;background:#e5eedb"></div><div class="t" style="left:480px;width:89px;top:636px;text-align:right;">-</div><div class="a" style="left:572px;top:636px;width:90px;height:14px;background:#fefdc7"></div><div class="t" style="left:571px;width:89px;top:636px;text-align:right;">-</div><div class="a" style="left:663px;top:636px;width:90px;height:14px;background:#e5eedb"></div><div class="t" style="left:662px;width:89px;top:636px;text-align:right;">-</div><div class="a" style="left:754px;top:636px;width:90px;height:14px;background:#e5eedb"></div><div class="t" style="left:753px;width:89px;top:636px;text-align:right;">-</div><div class="a" style="left:845px;top:636px;width:90px;height:14px;background:#fefdc7"></div><div class="t" style="left:844px;width:89px;top:636px;text-align:right;">-</div><div class="a" style="left:936px;top:636px;width:90px;height:14px;background:#e5eedb"></div><div class="t" style="left:935px;width:89px;top:636px;text-align:right;">-</div><div class="a" style="left:1027px;top:636px;width:90px;height:14px;background:#e5eedb"></div><div class="t" style="left:1026px;width:89px;top:636px;text-align:right;">-</div><div class="a" style="left:1118px;top:636px;width:90px;height:14px;background:#fefdc7"></div><div class="t" style="left:1117px;width:89px;top:636px;text-align:right;">-</div><div class="a" style="left:1209px;top:636px;width:90px;height:14px;background:#e5eedb"></div><div class="t" style="left:1208px;width:89px;top:636px;text-align:right;">-</div><div class="a" style="left:1300px;top:636px;width:90px;height:14px;background:#fefdc7"></div><div class="t" style="left:1299px;width:89px;top:636px;text-align:right;">-</div><div class="t" style="left:420px;top:651px;">За 2024 г.</div><div class="a" style="left:481px;top:651px;width:90px;height:14px;background:#e5eedb"></div><div class="t" style="left:480px;width:89px;top:651px;text-align:right;">-</div><div class="a" style="left:572px;top:651px;width:90px;height:14px;background:#fefdc7"></div><div class="t" style="left:571px;width:89px;top:651px;text-align:right;">-</div><div class="a" style="left:663px;top:651px;width:90px;height:14px;background:#e5eedb"></div><div class="t" style="left:662px;width:89px;top:651px;text-align:right;">-</div><div class="a" style="left:754px;top:651px;width:90px;height:14px;background:#e5eedb"></div><div class="t" style="left:753px;width:89px;top:651px;text-align:right;">-</div><div class="a" style="left:845px;top:651px;width:90px;height:14px;background:#fefdc7"></div><div class="t" style="left:844px;width:89px;top:651px;text-align:right;">-</div><div class="a" style="left:936px;top:651px;width:90px;height:14px;background:#e5eedb"></div><div class="t" style="left:935px;width:89px;top:651px;text-align:right;">-</div><div class="a" style="left:1027px;top:651px;width:90px;height:14px;background:#e5eedb"></div><div class="t" style="left:1026px;width:89px;top:651px;text-align:right;">-</div><div class="a" style="left:1118px;top:651px;width:90px;height:14px;background:#fefdc7"></div><div class="t" style="left:1117px;width:89px;top:651px;text-align:right;">-</div><div class="a" style="left:1209px;top:651px;width:90px;height:14px;background:#e5eedb"></div><div class="t" style="left:1208px;width:89px;top:651px;text-align:right;">-</div><div class="a" style="left:1300px;top:651px;width:90px;height:14px;background:#fefdc7"></div><div class="t" style="left:1299px;width:89px;top:651px;text-align:right;">-</div><div class="a" style="left:249px;top:666px;width:168px;height:29px;background:#fefdc7"></div><div class="t" style="left:251px;top:666px;font-size:11px">Резервы под обесценение<br>финансовых вложений</div><div class="t" style="left:420px;top:666px;">За 2025 г.</div><div class="a" style="left:481px;top:666px;width:90px;height:14px;background:#fefdc7"></div><div class="t" style="left:480px;width:89px;top:666px;text-align:right;">-</div><div class="a" style="left:572px;top:666px;width:90px;height:14px;background:#e5eedb"></div><div class="t" style="left:571px;width:89px;top:666px;text-align:right;">-</div><div class="a" style="left:663px;top:666px;width:90px;height:14px;background:#fefdc7"></div><div class="t" style="left:662px;width:89px;top:666px;text-align:right;">-</div><div class="a" style="left:754px;top:666px;width:90px;height:14px;background:#fefdc7"></div><div class="t" style="left:753px;width:89px;top:666px;text-align:right;">-</div><div class="a" style="left:845px;top:666px;width:90px;height:14px;background:#fefdc7"></div><div class="t" style="left:844px;width:89px;top:666px;text-align:right;">-</div><div class="a" style="left:936px;top:666px;width:90px;height:14px;background:#fefdc7"></div><div class="t" style="left:935px;width:89px;top:666px;text-align:right;">-</div><div class="a" style="left:1027px;top:666px;width:90px;height:14px;background:#e5eedb"></div><div class="t" style="left:1026px;width:89px;top:666px;text-align:right;">(350)</div><div class="a" style="left:1118px;top:666px;width:90px;height:14px;background:#fefdc7"></div><div class="t" style="left:1117px;width:89px;top:666px;text-align:right;">-</div><div class="a" style="left:1209px;top:666px;width:90px;height:14px;background:#fefdc7"></div><div class="t" style="left:1208px;width:89px;top:666px;text-align:right;">-</div><div class="a" style="left:1300px;top:666px;width:90px;height:14px;background:#e5eedb"></div><div class="t" style="left:1299px;width:89px;top:666px;text-align:right;">(350)</div><div class="t" style="left:420px;top:681px;">За 2024 г.</div><div class="a" style="left:481px;top:681px;width:90px;height:14px;background:#fefdc7"></div><div class="t" style="left:480px;width:89px;top:681px;text-align:right;">-</div><div class="a" style="left:572px;top:681px;width:90px;height:14px;background:#e5eedb"></div><div class="t" style="left:571px;width:89px;top:681px;text-align:right;">-</div><div class="a" style="left:663px;top:681px;width:90px;height:14px;background:#fefdc7"></div><div class="t" style="left:662px;width:89px;top:681px;text-align:right;">-</div><div class="a" style="left:754px;top:681px;width:90px;height:14px;background:#fefdc7"></div><div class="t" style="left:753px;width:89px;top:681px;text-align:right;">-</div><div class="a" style="left:845px;top:681px;width:90px;height:14px;background:#fefdc7"></div><div class="t" style="left:844px;width:89px;top:681px;text-align:right;">-</div><div class="a" style="left:936px;top:681px;width:90px;height:14px;background:#fefdc7"></div><div class="t" style="left:935px;width:89px;top:681px;text-align:right;">-</div><div class="a" style="left:1027px;top:681px;width:90px;height:14px;background:#e5eedb"></div><div class="t" style="left:1026px;width:89px;top:681px;text-align:right;">-</div><div class="a" style="left:1118px;top:681px;width:90px;height:14px;background:#fefdc7"></div><div class="t" style="left:1117px;width:89px;top:681px;text-align:right;">-</div><div class="a" style="left:1209px;top:681px;width:90px;height:14px;background:#fefdc7"></div><div class="t" style="left:1208px;width:89px;top:681px;text-align:right;">-</div><div class="a" style="left:1300px;top:681px;width:90px;height:14px;background:#e5eedb"></div><div class="t" style="left:1299px;width:89px;top:681px;text-align:right;">-</div><div class="t" style="left:237px;top:696px;font-size:11px">Итого</div><div class="t" style="left:420px;top:696px;">За 2025 г.</div><div class="a" style="left:481px;top:696px;width:90px;height:14px;background:#c5ddc3"></div><div class="t" style="left:480px;width:89px;top:696px;text-align:right;">3 050</div><div class="a" style="left:572px;top:696px;width:90px;height:14px;background:#c5ddc3"></div><div class="t" style="left:571px;width:89px;top:696px;text-align:right;">(200)</div><div class="a" style="left:663px;top:696px;width:90px;height:14px;background:#c5ddc3"></div><div class="t" style="left:662px;width:89px;top:696px;text-align:right;">2 300</div><div class="a" style="left:754px;top:696px;width:90px;height:14px;background:#c5ddc3"></div><div class="t" style="left:753px;width:89px;top:696px;text-align:right;">(1 600)</div><div class="a" style="left:845px;top:696px;width:90px;height:14px;background:#c5ddc3"></div><div class="t" style="left:844px;width:89px;top:696px;text-align:right;">-</div><div class="a" style="left:936px;top:696px;width:90px;height:14px;background:#c5ddc3"></div><div class="t" style="left:935px;width:89px;top:696px;text-align:right;">450</div><div class="a" style="left:1027px;top:696px;width:90px;height:14px;background:#c5ddc3"></div><div class="t" style="left:1026px;width:89px;top:696px;text-align:right;">(470)</div><div class="a" style="left:1118px;top:696px;width:90px;height:14px;background:#c5ddc3"></div><div class="t" style="left:1117px;width:89px;top:696px;text-align:right;">-</div><div class="a" style="left:1209px;top:696px;width:90px;height:14px;background:#c5ddc3"></div><div class="t" style="left:1208px;width:89px;top:696px;text-align:right;">4 180</div><div class="a" style="left:1300px;top:696px;width:90px;height:14px;background:#c5ddc3"></div><div class="t" style="left:1299px;width:89px;top:696px;text-align:right;">(650)</div><div class="t" style="left:420px;top:711px;">За 2024 г.</div><div class="a" style="left:481px;top:711px;width:90px;height:14px;background:#c5ddc3"></div><div class="t" style="left:480px;width:89px;top:711px;text-align:right;">1 550</div><div class="a" style="left:572px;top:711px;width:90px;height:14px;background:#c5ddc3"></div><div class="t" style="left:571px;width:89px;top:711px;text-align:right;">-</div><div class="a" style="left:663px;top:711px;width:90px;height:14px;background:#c5ddc3"></div><div class="t" style="left:662px;width:89px;top:711px;text-align:right;">1 300</div><div class="a" style="left:754px;top:711px;width:90px;height:14px;background:#c5ddc3"></div><div class="t" style="left:753px;width:89px;top:711px;text-align:right;">-</div><div class="a" style="left:845px;top:711px;width:90px;height:14px;background:#c5ddc3"></div><div class="t" style="left:844px;width:89px;top:711px;text-align:right;">-</div><div class="a" style="left:936px;top:711px;width:90px;height:14px;background:#c5ddc3"></div><div class="t" style="left:935px;width:89px;top:711px;text-align:right;">200</div><div class="a" style="left:1027px;top:711px;width:90px;height:14px;background:#c5ddc3"></div><div class="t" style="left:1026px;width:89px;top:711px;text-align:right;">(200)</div><div class="a" style="left:1118px;top:711px;width:90px;height:14px;background:#c5ddc3"></div><div class="t" style="left:1117px;width:89px;top:711px;text-align:right;">-</div><div class="a" style="left:1209px;top:711px;width:90px;height:14px;background:#c5ddc3"></div><div class="t" style="left:1208px;width:89px;top:711px;text-align:right;">3 050</div><div class="a" style="left:1300px;top:711px;width:90px;height:14px;background:#c5ddc3"></div><div class="t" style="left:1299px;width:89px;top:711px;text-align:right;">(200)</div><div class="t" style="left:235px;width:182px;top:236px;text-align:center;font-size:11.2px">Наименование показателя</div><div class="t" style="left:417px;width:63px;top:236px;text-align:center;font-size:11.2px">Период</div><div class="t" style="left:480px;width:182px;top:194px;text-align:center;font-size:11.2px">На начало года</div><div class="t" style="left:662px;width:546px;top:194px;text-align:center;font-size:11.2px">Изменения за период</div><div class="t" style="left:1208px;width:182px;top:194px;text-align:center;font-size:11.2px">На конец периода</div><div class="t" style="left:480px;width:91px;top:236px;text-align:center;font-size:11.2px">первоначальная<br>стоимость</div><div class="t" style="left:571px;width:91px;top:236px;text-align:center;font-size:11.2px">накопленная<br>корректировка</div><div class="t" style="left:662px;width:91px;top:244px;text-align:center;font-size:11.2px">поступило</div><div class="t" style="left:753px;width:182px;top:223px;text-align:center;font-size:11.2px">списано</div><div class="t" style="left:753px;width:91px;top:257px;text-align:center;font-size:11.2px">первоначальная<br>стоимость</div><div class="t" style="left:844px;width:91px;top:257px;text-align:center;font-size:11.2px">накопленная<br>корректировка</div><div class="t" style="left:935px;width:91px;top:208px;text-align:center;font-size:11.2px">проценты<br>(включая<br>доведение<br>первоначальной<br>стоимости до<br>номинальной)</div><div class="t" style="left:1026px;width:91px;top:215px;text-align:center;font-size:11.2px">текущей<br>рыночной<br>стоимости/резе<br>рва под<br>обесценение</div><div class="t" style="left:1117px;width:91px;top:236px;text-align:center;font-size:11.2px">переклассифиц<br>ировано</div><div class="t" style="left:1208px;width:91px;top:236px;text-align:center;font-size:11.2px">первоначальная<br>стоимость</div><div class="t" style="left:1299px;width:91px;top:236px;text-align:center;font-size:11.2px">накопленная<br>корректировка</div><div class="hl" style="left:235px;top:192px;width:1156px"></div><div class="hl" style="left:480px;top:207px;width:911px"></div><div class="hl" style="left:753px;top:250px;width:183px"></div><div class="hl" style="left:235px;top:292px;width:1156px"></div><div class="hl" style="left:417px;top:307px;width:974px"></div><div class="hl" style="left:235px;top:322px;width:1156px"></div><div class="hl" style="left:417px;top:352px;width:974px"></div><div class="hl" style="left:235px;top:367px;width:1156px"></div><div class="hl" style="left:417px;top:382px;width:974px"></div><div class="hl" style="left:235px;top:397px;width:1156px"></div><div class="hl" style="left:417px;top:412px;width:974px"></div><div class="hl" style="left:235px;top:427px;width:1156px"></div><div class="hl" style="left:417px;top:442px;width:974px"></div><div class="hl" style="left:235px;top:457px;width:1156px"></div><div class="hl" style="left:417px;top:472px;width:974px"></div><div class="hl" style="left:235px;top:487px;width:1156px"></div><div class="hl" style="left:417px;top:502px;width:974px"></div><div class="hl" style="left:235px;top:517px;width:1156px"></div><div class="hl" style="left:417px;top:532px;width:974px"></div><div class="hl" style="left:235px;top:547px;width:1156px"></div><div class="hl" style="left:417px;top:584px;width:974px"></div><div class="hl" style="left:235px;top:605px;width:1156px"></div><div class="hl" style="left:417px;top:620px;width:974px"></div><div class="hl" style="left:235px;top:635px;width:1156px"></div><div class="hl" style="left:417px;top:650px;width:974px"></div><div class="hl" style="left:235px;top:665px;width:1156px"></div><div class="hl" style="left:417px;top:680px;width:974px"></div><div class="hl" style="left:235px;top:695px;width:1156px"></div><div class="hl" style="left:417px;top:710px;width:974px"></div><div class="hl" style="left:235px;top:725px;width:1156px"></div><div class="vl" style="left:235px;top:192px;height:534px"></div><div class="vl" style="left:417px;top:192px;height:534px"></div><div class="vl" style="left:480px;top:192px;height:534px"></div><div class="vl" style="left:571px;top:207px;height:519px"></div><div class="vl" style="left:662px;top:192px;height:534px"></div><div class="vl" style="left:753px;top:207px;height:519px"></div><div class="vl" style="left:935px;top:207px;height:519px"></div><div class="vl" style="left:1026px;top:207px;height:519px"></div><div class="vl" style="left:1117px;top:207px;height:519px"></div><div class="vl" style="left:844px;top:250px;height:476px"></div><div class="vl" style="left:1208px;top:192px;height:534px"></div><div class="vl" style="left:1299px;top:207px;height:519px"></div><div class="vl" style="left:1390px;top:192px;height:534px"></div>
<div class="a" style="left:477px;top:289px;width:98px;height:22px;border:2px solid #f9d80a"></div>
<svg class="a" style="left:240px;top:70px" width="210" height="115"><path d="M7,35 Q7,28 16,28 L48,28 L38,7 L68,28 L185,28 Q193,28 193,35 L193,98 Q193,103 185,103 L16,103 Q7,103 7,98 Z" transform="translate(5.5,5.5)" fill="none" stroke="#ececec" stroke-width="3"/><path d="M7,35 Q7,28 16,28 L48,28 L38,7 L68,28 L185,28 Q193,28 193,35 L193,98 Q193,103 185,103 L16,103 Q7,103 7,98 Z" transform="translate(5,5)" fill="#a3a3a3" stroke="#c3dfc3" stroke-width="3"/><path d="M7,35 Q7,28 16,28 L48,28 L38,7 L68,28 L185,28 Q193,28 193,35 L193,98 Q193,103 185,103 L16,103 Q7,103 7,98 Z" transform="translate(5,5)" fill="#a3a3a3"/><path d="M7,35 Q7,28 16,28 L48,28 L38,7 L68,28 L185,28 Q193,28 193,35 L193,98 Q193,103 185,103 L16,103 Q7,103 7,98 Z" fill="#d9f8fe" stroke="#3a9ad0" stroke-width="2.5" stroke-linejoin="round"/></svg>
<div class="a" style="left:245px;top:112px;width:186px;text-align:center;font-size:12.95px;line-height:16px;color:#111;white-space:nowrap">Нажмите, чтобы посмотреть<br>расшифровку выделенного<br>показателя</div>
<svg class="a" style="left:20px;top:408px" width="225" height="135"><path d="M6,14 Q6,7 15,7 L175,7 Q183,7 183,14 L183,80 L215,94 L183,98 L183,120 Q183,125 175,125 L15,125 Q6,125 6,120 Z" transform="translate(5.5,5.5)" fill="none" stroke="#ececec" stroke-width="3"/><path d="M6,14 Q6,7 15,7 L175,7 Q183,7 183,14 L183,80 L215,94 L183,98 L183,120 Q183,125 175,125 L15,125 Q6,125 6,120 Z" transform="translate(5,5)" fill="#a3a3a3" stroke="#c3dfc3" stroke-width="3"/><path d="M6,14 Q6,7 15,7 L175,7 Q183,7 183,14 L183,80 L215,94 L183,98 L183,120 Q183,125 175,125 L15,125 Q6,125 6,120 Z" transform="translate(5,5)" fill="#a3a3a3"/><path d="M6,14 Q6,7 15,7 L175,7 Q183,7 183,14 L183,80 L215,94 L183,98 L183,120 Q183,125 175,125 L15,125 Q6,125 6,120 Z" fill="#d9f8fe" stroke="#3a9ad0" stroke-width="2.5" stroke-linejoin="round"/></svg>
<div class="a" style="left:25px;top:426.5px;width:177px;text-align:center;font-size:12.95px;line-height:16px;color:#111;white-space:nowrap">Распределите данные по<br>резерву между видами<br>финансовых вложений и<br>внесите другие<br>корректировки при<br>необходимости</div>
</body></html>
